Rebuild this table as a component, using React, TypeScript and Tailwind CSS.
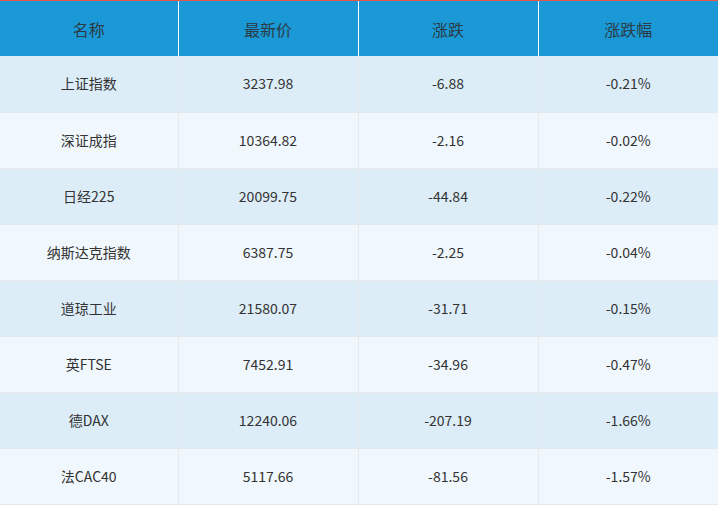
const rows = [
  { name: "上证指数", price: "3237.98", change: "-6.88", pct: "-0.21%" },
  { name: "深证成指", price: "10364.82", change: "-2.16", pct: "-0.02%" },
  { name: "日经225", price: "20099.75", change: "-44.84", pct: "-0.22%" },
  { name: "纳斯达克指数", price: "6387.75", change: "-2.25", pct: "-0.04%" },
  { name: "道琼工业", price: "21580.07", change: "-31.71", pct: "-0.15%" },
  { name: "英FTSE", price: "7452.91", change: "-34.96", pct: "-0.47%" },
  { name: "德DAX", price: "12240.06", change: "-207.19", pct: "-1.66%" },
  { name: "法CAC40", price: "5117.66", change: "-81.56", pct: "-1.57%" },
];

const headers = ["名称", "最新价", "涨跌", "涨跌幅"];

export default function App() {
  return (
    <div className="w-[718px] h-[514px] bg-white font-['Noto_Sans_CJK_SC',sans-serif] text-[#333]">
      <div className="h-px bg-[#e0594b]" />
      <table className="w-full table-fixed border-collapse">
        <colgroup>
          <col className="w-[178px]" />
          <col className="w-[180px]" />
          <col className="w-[180px]" />
          <col className="w-[180px]" />
        </colgroup>
        <thead>
          <tr className="h-[55px] bg-[#1a99d6]">
            {headers.map((h, i) => (
              <th
                key={h}
                className={
                  "p-0 text-center text-[16px] font-normal text-[#2b3a44] " +
                  (i > 0 ? "border-l border-white" : "")
                }
              >
                {h}
              </th>
            ))}
          </tr>
        </thead>
        <tbody>
          {rows.map((r, idx) => (
            <tr
              key={r.name}
              className={
                "h-[56px] border-b border-[#e6e9eb] " +
                (idx % 2 === 0 ? "bg-[#dcedf8]" : "bg-[#f0f8fe]")
              }
            >
              {[r.name, r.price, r.change, r.pct].map((v, i) => (
                <td
                  key={i}
                  className={
                    "p-0 text-center text-[14px] " +
                    (i > 0 ? "border-l border-[#e6e9eb]" : "")
                  }
                >
                  {v}
                </td>
              ))}
            </tr>
          ))}
        </tbody>
      </table>
    </div>
  );
}
